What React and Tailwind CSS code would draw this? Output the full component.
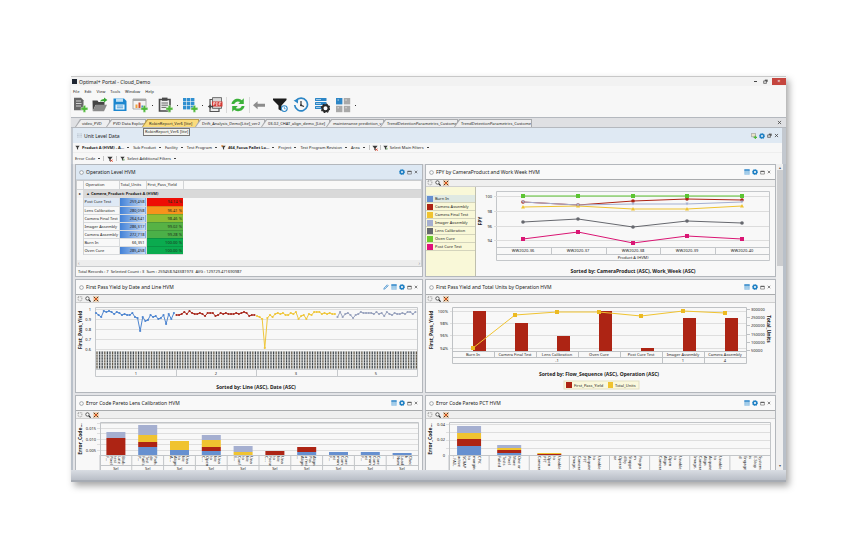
import React from 'react';

const BLUE = '#6690d0';
const RED = '#ad2414';
const YELLOW = '#f0c330';
const LAVENDER = '#a5afd0';

const menus = ['File', 'Edit', 'View', 'Tools', 'Window', 'Help'];

const tabs = [
    { label: 'video_PVD', width: 'w-[35px]' },
    { label: 'PVD Data Explore', width: 'w-[40px]' },
    { label: 'RobinReport_Ver6 [lite]', width: 'w-[57px]', active: true },
    { label: 'Drift_Analysis_Demo[Lite]_ver2', width: 'w-[70px]' },
    { label: '03-02_CHAT_align_demo_[Lite]', width: 'w-[69px]' },
    { label: 'maintenance prediction_v', width: 'w-[58px]' },
    { label: 'TrendDetectionParametrics_Custome', width: 'w-[78px]' },
    { label: 'TrendDetectionParametrics_Custome', width: 'w-[78px]' },
];

const operations = [
    { name: 'Post Cure Test', units: '259,458', pct: '94.14 %', bg: 'bg-[#ee0d05]', bar: true, selected: true },
    { name: 'Lens Calibration', units: '280,058', pct: '96.41 %', bg: 'bg-[#f7931c]', bar: true },
    { name: 'Camera Final Test', units: '264,641', pct: '98.46 %', bg: 'bg-[#8dbd33]', bar: true },
    { name: 'Imager Assembly', units: '286,317', pct: '99.02 %', bg: 'bg-[#57b245]', bar: true },
    { name: 'Camera Assembly', units: '272,718', pct: '99.28 %', bg: 'bg-[#4bb048]', bar: true },
    { name: 'Burn In', units: '66,351', pct: '100.00 %', bg: 'bg-[#0bab4f]' },
    { name: 'Oven Cure', units: '285,458', pct: '100.00 %', bg: 'bg-[#0bab4f]', bar: true },
];

const cameraSeries = [
    { name: 'Burn In', color: BLUE, swatch: 'bg-[#6690d0]', selected: true, ys: [] },
    { name: 'Camera Assembly', color: RED, swatch: 'bg-[#ad2414]', shape: 'dot', ys: [15, 18, 14, 12, 13] },
    { name: 'Camera Final Test', color: YELLOW, swatch: 'bg-[#f0c330]', shape: 'up', ys: [20, 19, 22, 22, 19] },
    { name: 'Imager Assembly', color: LAVENDER, swatch: 'bg-[#a5afd0]', shape: 'down', ys: [15, 18, 17, 17, 15] },
    { name: 'Lens Calibration', color: '#66686e', swatch: 'bg-[#66686e]', shape: 'dot', ys: [35, 32, 40, 34, 36] },
    { name: 'Oven Cure', color: '#5cc433', swatch: 'bg-[#6ccb2c]', shape: 'square', ys: [9, 9, 9, 9, 9] },
    { name: 'Post Cure Test', color: '#da1674', swatch: 'bg-[#e0107c]', shape: 'square', ys: [52, 45, 56, 49, 52] },
];

// yield in percent, one list for each line
const lineYields = [
    { line: '1', color: '#4f86d0', values: [96, 94, 92, 98, 97, 98, 97, 95, 97, 96, 94, 95, 94, 94, 96, 92, 91, 78, 92, 88, 89, 94, 92, 93, 90, 91, 94, 85, 95, 90, 96] },
    { line: '2', color: '#a92b20', values: [94, 94, 95, 97, 95, 98, 96, 95, 95, 96, 95, 93, 96, 96, 96, 93, 94, 96, 95, 96, 95, 95, 95, 96, 95, 96, 97, 96, 93, 94, 94] },
    { line: '3', color: '#efc73c', values: [93, 92, 90, 61, 91, 94, 92, 95, 96, 95, 96, 94, 94, 96, 95, 97, 90, 93, 94, 90, 95, 94, 97, 97, 97, 95, 96, 95, 96, 95, 95] },
    { line: '5', color: '#98a2bd', values: [92, 97, 92, 95, 96, 94, 91, 94, 95, 97, 96, 96, 96, 96, 95, 97, 95, 96, 93, 97, 95, 94, 96, 95, 95, 96, 95, 97, 97, 95, 97] },
];

const operationBars = [
    { name: 'Burn In', top: 8, units: 45 },
    { name: 'Camera Final Test', top: 20, units: 12 },
    { name: 'Lens Calibration', top: 33, units: 9 },
    { name: 'Oven Cure', top: 8, units: 9 },
    { name: 'Post Cure Test', top: 45, units: 13 },
    { name: 'Imager Assembly', top: 15, units: 8 },
    { name: 'Camera Assembly', top: 15, units: 10 },
];

// stacks are [color, height] from the axis up
const lensPareto = [
    { stack: [[RED, 17], [LAVENDER, 6]], lines: ['Blob', 'Late', 'test', 'Pixel', 'F...'] },
    { stack: [[BLUE, 8], [RED, 5], [YELLOW, 7], [LAVENDER, 10]], lines: ['Path', 'de', 'Test', 'Fail(s)', 'P...'] },
    { stack: [[BLUE, 5], [YELLOW, 9]], lines: ['Una', 'ble', 'to', 'Align', 'A...'] },
    { stack: [[BLUE, 4], [RED, 4], [YELLOW, 7], [LAVENDER, 5]], lines: ['Una', 'ble', 'to', 'Open', 'C...'] },
    { stack: [[YELLOW, 3], [LAVENDER, 6]], lines: ['Una', 'ble', 'to', 'Conf', 'E...'] },
    { stack: [[RED, 4]], lines: ['Una', 'ble', 'to', 'Focus', 'C...'] },
    { stack: [[BLUE, 3], [RED, 5]], lines: ['Align', 'Pos', 'a fmt', 'Align', '...'] },
    { stack: [[BLUE, 3]], lines: ['Core', 'Com', 'mun', 'nt', 'F...'] },
    { stack: [[BLUE, 3]], lines: ['Core', 'Com', 'mun', 'nt', 'F...'] },
    { stack: [[BLUE, 2]], lines: ['Chec', 'k', 'Load', 'Num', '...'] },
];

const pctPareto = [
    { stack: [[BLUE, 9], [RED, 7], [YELLOW, 6], [LAVENDER, 7]], lines: ['CPK', 'margin', 'to', 'SCRAP', 'active', '- FAIL'] },
    { stack: [[BLUE, 2], [RED, 3], [YELLOW, 2], [LAVENDER, 3]], lines: ['One or', 'More', 'Pixel', 'Tests', 'Failed'] },
    { stack: [[RED, 1], [YELLOW, 1]], lines: ['Unable', 'to', 'Open', 'PFT', 'Camera'] },
    { stack: [], lines: ['Unable', 'to', 'Acquire', 'PFT', 'Camera', 'Image.'] },
    { stack: [], lines: ['Progra', 'm', 'Stoppe', 'd by', 'Operat', 'or'] },
    { stack: [], lines: ['Unable', 'to', 'Open', 'Align', 'Camera'] },
    { stack: [], lines: ['Unable', 'to', 'Acquire', 'Align', 'Camera', 'Image.'] },
    { stack: [], lines: ['System', 'E-Stop', 'is', 'Engage', 'd'] },
];

/* ---------- icons ---------- */

const Plus = () => (
    <path d="M11.2 8.4h2.4v2.2h2.200v2.400h-2.200v2.200h-2.400v-2.200H9v-2.400h2.200z" fill="#4fb83a" stroke="#e9f6e4" strokeWidth=".4" />
);

const icons = {
    newReport: (
        <>
            <path d="M2 .8h7l2.5 2.5v10H2z" fill="#666" />
            <path d="M4 4h5M4 6.5h5.5M4 9h5" stroke="#ddd" strokeWidth=".9" />
            <Plus />
        </>
    ),
    open: (
        <>
            <path d="M.5 3.5h5l1 1.5h6v3h-9L.8 14z" fill="#444" />
            <path d="M3.6 7.8H15L12 14.2H.8z" fill="#8a8a8a" />
            <path d="M8 4.5c1-2 2.5-2.6 4-2.6V.5l3.4 2.6L12 5.6V4.2c-1.5 0-2.5 0-4 .3z" fill="#36a832" />
        </>
    ),
    save: (
        <>
            <path d="M1.5 1.5H12L14.5 4v10h-13z" fill="#1d87cf" />
            <path d="M4 1.5h7v3.300H4z" fill="#bfe0f5" />
            <path d="M3.5 7.5h9v5h-9z" fill="#f3f9fd" />
            <path d="M4.8 9h6.400M4.800 10.800h6.400" stroke="#1d87cf" strokeWidth=".8" />
        </>
    ),
    chart: (
        <>
            <path d="M1 2h13v10H1z" fill="#f4f4f4" stroke="#999" strokeWidth=".8" />
            <path d="M1 2h13v2H1z" fill="#a8a8a8" />
            <path d="M3.5 7.5h2V11h-2z" fill="#efa13c" />
            <path d="M6.5 5.5h2V11h-2z" fill="#d34b2c" />
            <path d="M9.5 8.5H11V11H9.5z" fill="#3a80c4" />
            <Plus />
        </>
    ),
    clipboard: (
        <>
            <path d="M2.5 2.5H13V14H2.5z" fill="#eee" stroke="#4b4b4b" strokeWidth="1.6" />
            <path d="M5 .6h5.5v3.200H5z" fill="#4b4b4b" />
            <path d="M4.5 6H11M4.500 8.200H11M4.500 10.400h5" stroke="#666" />
            <Plus />
        </>
    ),
    grid: (
        <>
            {[1, 5, 9].map((y) => [1, 5, 9].map((x) => (
                <rect key={x + '-' + y} x={x} y={y} width="3.4" height="3.4" fill="#2f8fd0" />
            )))}
            <Plus />
        </>
    ),
    pdf: (
        <>
            <path d="M3 2.5h9v12H3z" fill="#ececec" stroke="#555" strokeWidth="1.2" />
            <path d="M5.5.6h9v10.800h-9z" fill="#d8d8d8" stroke="#555" strokeWidth=".8" />
            <path d="M5 4.5h10.500v5H5z" fill="#d53a35" />
            <path d="M6.5 8.5v-3H8V7H6.5M9.4 5.500v3h.8l.8-.8V6.300l-.8-.8zM12.400 8.500v-3h1.900M12.400 7h1.500" stroke="#fff" strokeWidth=".6" fill="none" />
            <path d="M.8 9.500l3-2.200v1.500h2.400v1.500H3.800v1.500z" fill="#444" />
        </>
    ),
    refresh: (
        <g fill="#3cb13a">
            <path d="M1.5 7C2 3.6 5 1.6 8.2 1.8c1.600.1 2.700.7 3.600 1.400L13.800 1.200V7H8.200l2-2C8 3.800 5.400 4.300 4.300 7z" />
            <path d="M14.5 9c-.5 3.400-3.500 5.400-6.700 5.200-1.600-.1-2.700-.7-3.600-1.400L2.200 14.800V9h5.600l-2 2c2.200 1.200 4.800.7 5.900-2z" />
        </g>
    ),
    back: <path d="M2 8.2l4.600-4v2.500H14v3H6.600v2.500z" fill="#8c8c8c" />,
    funnel: (
        <>
            <path d="M1 1.500h13.500v1.600L9.500 8.500V14l-3-1.700V8.500L1 3.100z" fill="#1c1c1c" />
            <circle cx="12.3" cy="11.6" r="2.9" fill="#fff" stroke="#2c86c6" strokeWidth="1.1" />
            <path d="M12.300 9.800v2h1.400" stroke="#2c86c6" strokeWidth=".8" fill="none" />
        </>
    ),
    clock: (
        <>
            <path d="M3 3.6A6.400 6.400 0 1 1 1.700 8" fill="none" stroke="#2c86c6" strokeWidth="1.7" />
            <path d="M.6 3.600l4.600-1.700-.3 4.600z" fill="#2c86c6" />
            <path d="M8 4v4.300l3 1.200" fill="none" stroke="#333" strokeWidth="1.2" />
            <circle cx="8" cy="8.2" r="1" fill="#333" />
        </>
    ),
    serverGear: (
        <>
            {[1, 5, 9].map((y) => (
                <g key={y}>
                    <rect x="1" y={y} width="11.5" height="3" rx=".5" fill="#2c86c6" />
                    <path d={`M2 ${y + 1.5}h5`} stroke="#cfe6f6" strokeWidth=".7" />
                </g>
            ))}
            <circle cx="11.5" cy="11.3" r="3" fill="#fff" stroke="#2b2b2b" strokeWidth="2" />
            <circle cx="11.5" cy="11.3" r="4.2" fill="none" stroke="#2b2b2b" strokeWidth="1.2" strokeDasharray="1.7 1.6" />
        </>
    ),
    tiles: (
        <>
            <rect x="1" y="1" width="6.4" height="6.4" fill="#2c86c6" />
            <rect x="8.8" y="1" width="6.4" height="6.4" fill="#a9a9a9" />
            <rect x="1" y="8.8" width="6.4" height="6.4" fill="#a9a9a9" />
            <rect x="8.8" y="8.8" width="6.4" height="6.4" fill="#a9a9a9" />
            <path d="M2.500 3h1.500M10.300 3h1.500M2.500 10.800H4M10.300 10.800h1.500" stroke="#eee" strokeWidth=".8" />
        </>
    ),
    smallFunnel: <path d="M1 2h14L9.8 8.500V15L6.200 12.500v-4z" fill="#3a3a3a" />,
    orangeFunnel: (
        <>
            <path d="M1 2h14L9.8 8.500V15L6.200 12.500v-4z" fill="#3a3a3a" />
            <path d="M1 1h6v4H1z" fill="#ee8a2c" />
        </>
    ),
    clearFunnel: (
        <>
            <path d="M1 2h14L9.8 8.500V15L6.200 12.500v-4z" fill="#3a3a3a" />
            <path d="M9.500 9.500l5.500 5.500M15 9.500L9.500 15" stroke="#e2452c" strokeWidth="2.6" />
        </>
    ),
    addFunnel: (
        <>
            <path d="M1 2h14L9.8 8.500V15L6.200 12.500v-4z" fill="#3a3a3a" />
            <path d="M12 8.500v7M8.500 12h7" stroke="#72a96a" strokeWidth="2" />
        </>
    ),
    gear: (
        <>
            <circle cx="8" cy="8" r="4.8" fill="none" stroke="#1f80c4" strokeWidth="4" />
            <circle cx="8" cy="8" r="7" fill="none" stroke="#1f80c4" strokeWidth="2" strokeDasharray="2.7 2.8" />
        </>
    ),
    table: (
        <>
            <path d="M1 1h14v14H1z" fill="#7db6e0" />
            <path d="M1 1h14v3.500H1z" fill="#2f86c8" />
            <path d="M1 8h14M1 11.500h14M5.700 4.500V15M10.300 4.500V15" stroke="#d9ebf8" />
        </>
    ),
    link: <path d="M2 14l3.500-1L14 4.500 11.500 2 3 10.500zM9 5l2 2" fill="#cfe3f4" stroke="#4b93cc" strokeWidth="2" />,
    restore: (
        <>
            <path d="M2 4h12v9H2z" fill="none" stroke="#555" strokeWidth="1.8" />
            <path d="M2 4.500h12" stroke="#555" strokeWidth="3" />
        </>
    ),
    windows: (
        <>
            <path d="M6 2h9v7H6z" fill="#555" />
            <path d="M2 6h9v8H2z" fill="#ddd" stroke="#444" strokeWidth="2" />
        </>
    ),
    close: <path d="M3 3l10 10M13 3L3 13" stroke="#444" strokeWidth="2.5" />,
    addPanel: (
        <>
            <path d="M1 1h11v9H1z" fill="#e8e3c8" stroke="#8b8b8b" strokeWidth="1.5" />
            <path d="M11.500 7v9M7 11.500h9" stroke="#4fb83a" strokeWidth="3" />
        </>
    ),
    lasso: <path d="M3 2h10v9l-6 3-4-4z" fill="none" stroke="#555" strokeWidth="1.5" strokeDasharray="2.5 2" />,
    magnifier: (
        <>
            <circle cx="6.5" cy="6.5" r="4.5" fill="#fff" stroke="#333" strokeWidth="2" />
            <path d="M10 10l5 5" stroke="#222" strokeWidth="3" />
        </>
    ),
    reset: (
        <>
            <path d="M1 1h14v14H1z" fill="#f1c79b" />
            <path d="M2 2l12 12M14 2L2 14" stroke="#3d2c22" strokeWidth="2.5" />
            <circle cx="8" cy="8" r="3" fill="#ea5a20" />
        </>
    ),
    dots: <path d="M1 3h14M1 8h14M1 13h14" stroke="#8d99a5" strokeWidth="2" strokeDasharray="2 2" />,
    ring: <circle cx="8" cy="8" r="6" fill="#f8f8f8" stroke="#7b8086" strokeWidth="2" />,
};

const Icon = ({ name, className }) => (
    <svg viewBox="0 0 16 16" className={'shrink-0 ' + className} aria-hidden="true">
        {icons[name]}
    </svg>
);

const IconButton = ({ name, label, size = 'size-[6px]' }) => (
    <button type="button" aria-label={label} className="flex items-center">
        <Icon name={name} className={size} />
    </button>
);

/* ---------- window chrome ---------- */

const ToolButton = ({ name, label, menu }) => (
    <button type="button" aria-label={label} className="flex items-center gap-1">
        <Icon name={name} className="size-4" />
        {menu && <span className="h-px w-px bg-[#333]" />}
    </button>
);

const Toolbar = () => (
    <div className="flex h-[21px] items-start pt-px pl-px">
        <div className="flex gap-1">
            <ToolButton name="newReport" label="New report" />
            <ToolButton name="open" label="Open" />
            <ToolButton name="save" label="Save" />
            <ToolButton name="chart" label="Add chart" menu />
            <ToolButton name="clipboard" label="Add report" menu />
            <ToolButton name="grid" label="Add table" menu />
            <ToolButton name="pdf" label="Export PDF" />
        </div>
        <div className="mr-px ml-[3px] flex border-x border-[#dadada] px-[3px]">
            <ToolButton name="refresh" label="Refresh" />
        </div>
        <div className="flex gap-[5px]">
            <ToolButton name="back" label="Back" />
            <ToolButton name="funnel" label="Filter" />
            <ToolButton name="clock" label="History" />
            <ToolButton name="serverGear" label="Data settings" />
            <ToolButton name="tiles" label="Layout" menu />
        </div>
    </div>
);

const Tab = ({ label, width, active }) => (
    <button
        type="button"
        className={
            '-ml-1 h-2 shrink-0 p-px pb-0 [clip-path:polygon(5px_0,100%_0,100%_100%,0_100%)] ' +
            width + (active ? ' bg-[#b99c4a]' : ' bg-[#a9abae]')
        }
    >
        <span
            className={
                'block h-full pl-[6px] text-left text-[4px] leading-[7px] whitespace-nowrap [clip-path:polygon(5px_0,100%_0,100%_100%,0_100%)] ' +
                (active ? 'bg-[#fadb7c]' : 'bg-[#eeeeef]')
            }
        >
            {label}
        </span>
    </button>
);

const Filter = ({ icon, label, bold }) => (
    <button type="button" className="flex items-center gap-[2px] whitespace-nowrap">
        {icon && <Icon name={icon} className="size-[5px]" />}
        <span className={bold ? 'font-bold' : ''}>{label}</span>
        <span className="ml-px h-px w-[2px] bg-[#444]" />
    </button>
);

const Divider = () => <span className="h-[5px] w-px bg-[#c4c4c4]" />;

const Panel = ({ title, selected, link, table = true, last, children }) => (
    <section
        className={
            'flex min-w-0 flex-col border-x border-t border-[#b3b7bc] bg-[#f8f8f8] ' +
            (last ? '' : 'border-b')
        }
    >
        <header
            className={
                'flex h-[15px] items-center gap-[2px] border-b pr-1 pl-[3px] ' +
                (selected ? 'border-[#c9d3dd] bg-[#dde8f3]' : 'border-[#a9abad] bg-[#f9f9f9]')
            }
        >
            <Icon name="ring" className="size-[5px]" />
            <h2 className="grow text-[5px] leading-[6px] whitespace-nowrap">{title}</h2>
            <div className="flex items-center gap-[2px]">
                {link && <IconButton name="link" label="Link" />}
                {table && <IconButton name="table" label="Show table" />}
                <IconButton name="gear" label="Settings" />
                <IconButton name="restore" label="Maximize" size="size-[5px]" />
                <IconButton name="close" label="Close" size="size-1" />
            </div>
        </header>
        {children}
    </section>
);

const ChartTools = ({ height = 'h-2' }) => (
    <div className={'flex items-center gap-[2px] border-b border-[#cfcfcf] bg-[#efefef] pl-px ' + height}>
        <IconButton name="lasso" label="Select" />
        <IconButton name="magnifier" label="Zoom" />
        <IconButton name="reset" label="Reset zoom" />
    </div>
);

/* ---------- charts ---------- */

const Label = ({ x, y, children, anchor = 'middle', rotate }) => (
    <text
        x={x}
        y={y}
        textAnchor={anchor}
        transform={rotate ? `rotate(${rotate} ${x} ${y})` : undefined}
        className="fill-[#1c1c1c] text-[4px]"
    >
        {children}
    </text>
);

const Title = ({ x, y, children, rotate }) => (
    <text
        x={x}
        y={y}
        textAnchor="middle"
        transform={rotate ? `rotate(${rotate} ${x} ${y})` : undefined}
        className="fill-[#222] text-[5px] font-bold"
    >
        {children}
    </text>
);

const Marker = ({ shape, x, y, color }) => {
    if (shape === 'square') return <rect x={x - 2} y={y - 2} width="4" height="4" fill={color} />;
    if (shape === 'up') return <path d={`M${x - 2} ${y + 1.5}h4l-2-3.5z`} fill={color} />;
    if (shape === 'down') return <path d={`M${x - 1.5} ${y - 1.5}h3l-1.5 3z`} fill={color} />;
    return <circle cx={x} cy={y} r="1.8" fill={color} />;
};

const CameraChart = () => {
    const xs = [47, 102, 157, 211, 266];
    return (
        <svg viewBox="0 0 299 89" className="block min-w-0 flex-1">
            <path d="M20.5 4.5h273v69h-273zM20.5 60.5h273M20.5 67.5h273M75.5 60v7M130.5 60v7M184.5 60v7M239.5 60v7" fill="none" stroke="#c4c7ca" />
            <path d="M18 9.500h275M18 24.500h275M18 39.500h275M18 53.500h275" stroke="#dcdcdc" />
            {['100', '98', '96', '94'].map((t, i) => (
                <Label key={t} x={16} y={[11, 26, 41, 55][i]} anchor="end">{t}</Label>
            ))}
            {cameraSeries.map((s) => (
                <g key={s.name}>
                    <polyline
                        points={s.ys.map((y, i) => xs[i] + ',' + y).join(' ')}
                        fill="none"
                        stroke={s.color}
                    />
                    {s.ys.map((y, i) => <Marker key={i} shape={s.shape} x={xs[i]} y={y} color={s.color} />)}
                </g>
            ))}
            {xs.map((x, i) => <Label key={x} x={x} y={65}>{'WW2020-' + (36 + i)}</Label>)}
            <Label x={157} y={72}>Product A (HVM)</Label>
            <Title x={6} y={34} rotate={-90}>FPY</Title>
            <Title x={157} y={86}>Sorted by: CameraProduct (ASC), Work_Week (ASC)</Title>
        </svg>
    );
};

const LineChart = () => {
    const step = 80.5 / 31;
    return (
        <svg viewBox="0 0 346 89" className="block w-full">
            <path d="M19 6.500h322M19 16.500h322M19 26.500h322M19 36.500h322M19 46.500h322" stroke="#dedede" />
            <path d="M19.500 4.500h322v69h-322zM19.500 66.500h322M100.500 66v7M180.500 66v7M261.500 66v7" fill="none" stroke="#c6c9cc" />
            {['1', '0.9', '0.8', '0.7', '0.6'].map((t, i) => (
                <Label key={t} x={15} y={8 + i * 10} anchor="end">{t}</Label>
            ))}
            <rect x="20" y="48" width="321" height="18" fill="#e2e3e2" />
            {Array.from({ length: 124 }, (_, i) => (
                <line
                    key={i}
                    x1={21 + i * step}
                    x2={21 + i * step}
                    y1="48.5"
                    y2="66"
                    stroke={i % 3 ? '#3f464c' : '#62594a'}
                    strokeWidth="1.2"
                    strokeDasharray="2.4 .5"
                />
            ))}
            {lineYields.map((s, n) => {
                const pts = s.values.map((v, i) => [20 + n * 80.5 + i * step, 106 - v]);
                return (
                    <g key={s.line}>
                        <polyline points={pts.map((p) => p.join(',')).join(' ')} fill="none" stroke={s.color} />
                        {pts.map(([x, y]) => <circle key={x} cx={x} cy={y} r="1.1" fill={s.color} />)}
                        <Label x={60 + n * 80} y={72}>{s.line}</Label>
                    </g>
                );
            })}
            <Title x={6} y={27} rotate={-90}>First_Pass_Yield</Title>
            <Title x={180} y={86}>Sorted by: Line (ASC), Date (ASC)</Title>
        </svg>
    );
};

const OperationChart = () => (
    <svg viewBox="0 0 349 89" className="block w-full">
        <path d="M24 8.500h297M24 20.500h297M24 32.500h297M24 45.500h297" stroke="#dedede" />
        <path d="M26.500 4.500h294v56h-294zM26.500 48.500h294M26.500 54.500h294M68.500 48v6M110.500 48v6M152.500 48v6M194.500 48v6M236.500 48v12M278.500 48v12" fill="none" stroke="#bfc2c5" />
        <path d="M321 6.500h3M321 14.500h3M321 22.500h3M321 31.500h3M321 39.500h3M321 47.500h3" stroke="#bfc2c5" />
        {['100%', '98%', '96%', '94%'].map((t, i) => (
            <Label key={t} x={22} y={[10, 22, 34, 47][i]} anchor="end">{t}</Label>
        ))}
        {['300000', '250000', '200000', '150000', '100000', '50000'].map((t, i) => (
            <Label key={t} x={325} y={[8, 16, 24, 33, 41, 49][i]} anchor="start">{t}</Label>
        ))}
        {operationBars.map((o, i) => (
            <g key={o.name}>
                <rect x={47 + i * 42} y={o.top} width="13" height={48 - o.top} fill={RED} />
                <Label x={47 + i * 42} y={53}>{o.name}</Label>
            </g>
        ))}
        <polyline
            points={operationBars.map((o, i) => 47 + i * 42 + ',' + o.units).join(' ')}
            fill="none"
            stroke={YELLOW}
        />
        {operationBars.map((o, i) => (
            <rect key={o.name} x={45 + i * 42} y={o.units - 2} width="4" height="4" fill="#ecba22" />
        ))}
        <Label x={131} y={59}>-1</Label>
        <Label x={257} y={59}>1</Label>
        <Label x={299} y={59}>4</Label>
        <Title x={7} y={27} rotate={-90}>First_Pass_Yield</Title>
        <Title x={341} y={26} rotate={90}>Total_Units</Title>
        <Title x={173} y={73}>Sorted by: Flow_Sequence (ASC), Operation (ASC)</Title>
        <rect x="138" y="78" width="75" height="8" fill="#faf8dc" stroke="#e2dfc4" />
        <rect x="140" y="79" width="6" height="6" fill={RED} />
        <Label x={148} y={84} anchor="start">First_Pass_Yield</Label>
        <rect x="182" y="79" width="5" height="6" fill={YELLOW} />
        <Label x={189} y={84} anchor="start">Total_Units</Label>
    </svg>
);

const ParetoChart = ({ width, data, left, right, barWidth, ticks, grid, group }) => {
    const pitch = (right - left) / data.length;
    return (
        <svg viewBox={`0 0 ${width} 51`} className="block w-full overflow-hidden">
            {grid.map((y) => <line key={y} x1={left - 3} x2={right} y1={y + 0.5} y2={y + 0.5} stroke="#dedede" />)}
            <path d={`M${left + 0.5} 51V3.5H${right + 0.5}V51M${left} 36.5H${right}`} fill="none" stroke="#c2c5c8" />
            {group && <path d={`M${left} 46.5H${right}`} stroke="#c2c5c8" />}
            {ticks.map(([t, y]) => <Label key={y} x={left - 4} y={y} anchor="end">{t}</Label>)}
            {data.map((d, i) => {
                const x = left + i * pitch;
                const start = x + (pitch - barWidth) / 2;
                let y = 36;
                return (
                    <g key={i}>
                        {d.stack.map(([color, h]) => {
                            y -= h;
                            return <rect key={color} x={start} y={y} width={barWidth} height={h} fill={color} />;
                        })}
                        <line x1={x} x2={x} y1="36" y2="51" stroke="#c2c5c8" />
                        {d.lines.map((line, n) => (
                            <Label
                                key={n}
                                x={start + barWidth - 3 - n * (group ? 4 : 5)}
                                y={37}
                                rotate={90}
                                anchor="start"
                            >
                                {line}
                            </Label>
                        ))}
                        {group && <rect x={x + 1} y="47" width={pitch - 2} height="4" fill="#f8f8f8" />}
                        {group && <Label x={x + pitch / 2} y={51}>{group}</Label>}
                    </g>
                );
            })}
            <Title x={6} y={20} rotate={-90}>Error_Code...</Title>
        </svg>
    );
};

/* ---------- operation table ---------- */

const OperationTable = () => (
    <>
        <div className="flex grow flex-col border border-[#c9cbcd] bg-[#f8f8f8]">
            <table className="w-full table-fixed border-collapse text-left text-[4px] leading-[7px]">
                <colgroup>
                    <col className="w-[6px]" />
                    <col className="w-[36px]" />
                    <col className="w-[27px]" />
                    <col className="w-[37px]" />
                    <col />
                </colgroup>
                <thead>
                    <tr className="h-2 border-b border-[#d2d4d6]">
                        <th className="border-r border-[#d2d4d6] p-0" />
                        <th className="border-r border-[#d2d4d6] p-0 pl-[2px] font-normal">Operation</th>
                        <th className="border-r border-[#d2d4d6] p-0 pl-px font-normal">Total_Units</th>
                        <th className="border-r border-[#d2d4d6] p-0 pl-px font-normal">First_Pass_Yield</th>
                        <th className="p-0" />
                    </tr>
                </thead>
                <tbody>
                    <tr className="h-[9px] bg-[#d9d9d9]">
                        <td className="bg-[#f3f3f3] p-0 text-center">▸</td>
                        <td colSpan="4" className="p-0 pl-1 font-bold whitespace-nowrap">
                            <span className="mr-[2px]">▴</span>Camera_Product: Product A (HVM)
                        </td>
                    </tr>
                    {operations.map((row) => (
                        <tr key={row.name} className="h-2">
                            <td className="border-r border-[#d2d4d6] p-0" />
                            <td
                                className={
                                    'border-r border-b border-[#d8dadc] p-0 pl-px whitespace-nowrap ' +
                                    (row.selected ? 'bg-[#dfe9f5]' : '')
                                }
                            >
                                {row.name}
                            </td>
                            <td
                                className={
                                    'border-r border-b border-[#d8dadc] p-0 pr-px text-right ' +
                                    (row.bar ? 'bg-linear-to-r from-[#3f7fd6] to-[#c8dcf5]' : '')
                                }
                            >
                                {row.units}
                            </td>
                            <td className={'border-b border-[#00000022] p-0 pr-px text-right text-[#20301c] ' + row.bg}>
                                {row.pct}
                            </td>
                            <td className="p-0" />
                        </tr>
                    ))}
                </tbody>
            </table>
            <div className="mt-auto flex h-[6px] items-center justify-between bg-[#ededed] px-px text-[5px] leading-[5px] text-[#888]">
                <span>‹</span>
                <span>›</span>
            </div>
        </div>
        <p className="h-[9px] pl-[2px] text-[4px] leading-[9px] whitespace-nowrap">
            Total Records : 7 &nbsp;Selected Count : 3 &nbsp;Sum : 259458.943381973 &nbsp;AVG : 129729.471690987
        </p>
    </>
);

const App = () => {
    return (
        <div className="min-h-screen bg-white pt-[76px] pr-[64px] pb-[53px] pl-[71px] font-['Noto_Sans','Open_Sans',sans-serif] text-[#222]">
            <main className="border-t border-[#c8c8c8] bg-[#f7f7f7] shadow-[3px_4px_7px_rgba(0,0,0,0.35)]">
                <div className="flex h-[9px] items-center bg-[#f2f2f2]">
                    <span className="mx-px size-[5px] bg-[#1d2430]" />
                    <h1 className="ml-px grow text-[5px] leading-[6px]">Optimal+ Portal - Cloud_Demo</h1>
                    <button type="button" aria-label="Minimize" className="mr-[6px] h-px w-[3px] bg-[#444]" />
                    <div className="mr-1"><IconButton name="windows" label="Restore" size="size-[5px]" /></div>
                    <button type="button" aria-label="Close" className="flex h-[7px] w-[14px] items-center justify-center bg-[#c5453e] text-[5px] leading-[5px] text-white">
                        ×
                    </button>
                </div>
                <nav className="flex h-[10px] items-center gap-[5px] pl-[2px] text-[4px] leading-[5px]">
                    {menus.map((m) => <button type="button" key={m}>{m}</button>)}
                </nav>
                <Toolbar />

                <div className="relative flex h-[11px] items-end border-y border-[#b4b8be] bg-[#dfe0e3] pl-2">
                    {tabs.map((tab, i) => <Tab key={i} {...tab} />)}
                    <div className="mr-1 mb-[2px] ml-auto"><IconButton name="close" label="Close tab" size="size-[5px]" /></div>
                    <div className="absolute top-[10px] left-[72px] z-10 border border-[#777] bg-[#f4f4f0] px-px text-[4px] leading-[6px] whitespace-nowrap">
                        RobinReport_Ver6 [lite]
                    </div>
                </div>

                <div className="border-r-4 border-l-2 border-[#c3c8cf]">
                    <div className="flex h-[15px] items-center gap-[2px] bg-[#dfe9f3] pr-[3px] pl-1">
                        <Icon name="dots" className="size-[5px]" />
                        <h2 className="grow text-[5px] leading-[6px]">Unit Level Data</h2>
                        <div className="flex items-center gap-[2px]">
                            <IconButton name="addPanel" label="Add panel" />
                            <IconButton name="gear" label="Settings" />
                            <IconButton name="windows" label="Restore" size="size-[5px]" />
                            <IconButton name="close" label="Close" size="size-[5px]" />
                        </div>
                    </div>
                    <div className="flex h-[10px] items-center gap-1 border-b border-[#eeeeee] pl-[2px] text-[4px]">
                        <Filter icon="smallFunnel" label="Product A (HVM) - A..." bold />
                        <Filter label="Sub Product" />
                        <Filter label="Facility" />
                        <Filter label="Test Program" />
                        <Filter icon="orangeFunnel" label="464_Focus Pallet Lo..." bold />
                        <Filter label="Project" />
                        <Filter label="Test Program Revision" />
                        <Filter label="Area" />
                        <div className="flex items-center gap-[2px]">
                            <Divider />
                            <IconButton name="clearFunnel" label="Clear main filters" />
                            <Divider />
                            <Filter icon="addFunnel" label="Select Main Filters" />
                        </div>
                    </div>
                    <div className="flex h-[11px] items-center gap-[3px] pl-[2px] text-[4px]">
                        <Filter label="Error Code" />
                        <Divider />
                        <IconButton name="clearFunnel" label="Clear additional filters" />
                        <Divider />
                        <Filter icon="addFunnel" label="Select Additional Filters" />
                    </div>
                </div>

                <div className="flex border-r-[3px] border-l-2 border-[#b9c0c9] bg-[#e3e4e7] pl-[2px]">
                    <div className="grid min-w-0 grow grid-cols-[348fr_351fr] gap-[2px]">
                        <Panel title="Operation Level HVM" selected table={false}>
                            <OperationTable />
                        </Panel>
                        <Panel title="FPY by CameraProduct and Work Week HVM">
                            <ChartTools height="h-[7px]" />
                            <div className="flex">
                                <ul className="w-[50px] shrink-0 border-r border-[#bfbfae] bg-[#f9f8d8] pt-2 text-[4px] leading-[7px]">
                                    {cameraSeries.map((s) => (
                                        <li
                                            key={s.name}
                                            className={
                                                'flex h-2 items-center gap-[2px] border-b border-[#d4d4bc] pl-px whitespace-nowrap ' +
                                                (s.selected ? 'bg-[#dfe9e3]' : '')
                                            }
                                        >
                                            <span className={'size-[6px] ' + s.swatch} />
                                            {s.name}
                                        </li>
                                    ))}
                                </ul>
                                <CameraChart />
                            </div>
                        </Panel>
                        <Panel title="First Pass Yield by Date and Line HVM" link>
                            <ChartTools />
                            <LineChart />
                        </Panel>
                        <Panel title="First Pass Yield and Total Units by Operation HVM">
                            <ChartTools />
                            <OperationChart />
                        </Panel>
                        <Panel title="Error Code Pareto Lens Calibration HVM" last>
                            <ChartTools />
                            <ParetoChart
                                width={346}
                                data={lensPareto}
                                left={24}
                                right={342}
                                barWidth={19}
                                ticks={[['0.015', 11], ['0.010', 22], ['0.005', 33]]}
                                grid={[4, 9, 14, 20, 25, 31]}
                                group="Sel"
                            />
                        </Panel>
                        <Panel title="Error Code Pareto PCT HVM" last>
                            <ChartTools />
                            <ParetoChart
                                width={349}
                                data={pctPareto}
                                left={23}
                                right={344}
                                barWidth={24}
                                ticks={[['0.04', 7], ['0.02', 22], ['0', 38]]}
                                grid={[5, 13, 21, 29]}
                            />
                        </Panel>
                    </div>
                    <div className="flex w-[7px] shrink-0 flex-col items-center bg-[#efefef] pt-[2px] pb-[2px] text-[4px] leading-[4px] text-[#555]">
                        <span>▴</span>
                        <span className="h-[96px] w-[6px] bg-[#cccdcf]" />
                        <span className="mt-auto">▾</span>
                    </div>
                </div>
                <div className="h-3 border-b-2 border-[#a6abb3] bg-linear-to-b from-[#d9dde3] to-[#b9bec7]" />
            </main>
        </div>
    );
};

export default App;
